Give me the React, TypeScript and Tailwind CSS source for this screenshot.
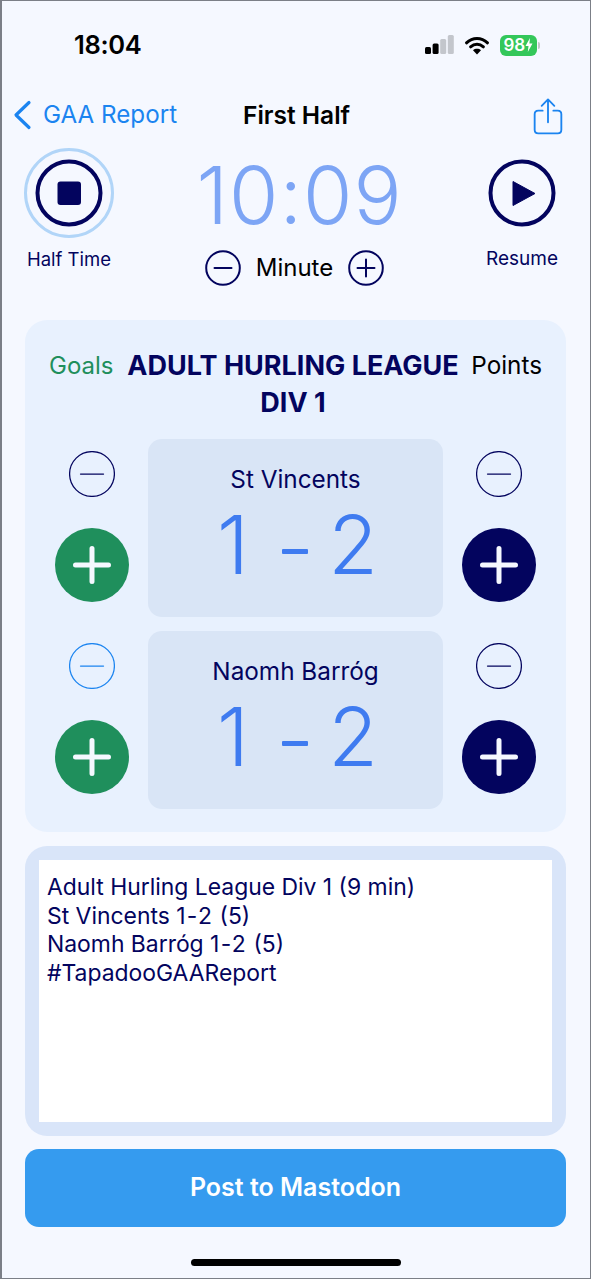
import React from "react";

const navy = "#03045e";

function MinusCircle({ size, color = navy, sw = 1.25 }: { size: number; color?: string; sw?: number }) {
  return (
    <svg width={size} height={size} viewBox="0 0 46 46" fill="none" className="shrink-0">
      <circle cx="23" cy="23" r="22.4" stroke={color} strokeWidth={sw} />
      <path d="M11.5 23H34.5" stroke={color} strokeWidth={sw} strokeLinecap="round" />
    </svg>
  );
}

function SmallCircle({ plus }: { plus?: boolean }) {
  return (
    <svg width="36" height="36" viewBox="0 0 36 36" fill="none" className="shrink-0">
      <circle cx="18" cy="18" r="16.8" stroke={navy} strokeWidth="2" />
      <path d={plus ? "M9.5 18H26.5M18 9.5V26.5" : "M9.5 18H26.5"} stroke={navy} strokeWidth="2" strokeLinecap="round" />
    </svg>
  );
}

function PlusButton({ color }: { color: string }) {
  return (
    <svg width="74" height="74" viewBox="0 0 74 74" className="shrink-0">
      <circle cx="37" cy="37" r="37" fill={color} />
      <path d="M20.5 37H53.5M37 20.5V53.5" stroke="#f5f8ff" strokeWidth="5" strokeLinecap="round" />
    </svg>
  );
}

function ScoreBox({ name }: { name: string }) {
  return (
    <div className="w-[295px] h-[178px] rounded-[14px] bg-[#d9e5f6] flex flex-col items-center">
      <div className="mt-[23px] text-[24.3px] leading-[34px] text-[#03045e]">{name}</div>
      <div className="mt-[3px] ml-[4px] w-[161px] flex items-center justify-between text-[81px] leading-[92px] font-light text-[#3f7bf0]">
        <span>1</span>
        <span className="w-[26px] h-[5px] mt-[12px] ml-[12px] bg-[#3f7bf0] rounded-[1px]" />
        <span>2</span>
      </div>
    </div>
  );
}

function Side({ green, minusColor }: { green?: boolean; minusColor?: string }) {
  return (
    <div className="w-[74px] flex flex-col items-center pt-[12px]">
      <MinusCircle size={46} color={minusColor ?? navy} />
      <div className="mt-[31px]">
        <PlusButton color={green ? "#1f8f5c" : navy} />
      </div>
    </div>
  );
}

function Row({ name, minusColor }: { name: string; minusColor?: string }) {
  return (
    <div className="flex justify-between h-[178px]">
      <Side green minusColor={minusColor} />
      <ScoreBox name={name} />
      <Side />
    </div>
  );
}

export default function App() {
  return (
    <div
      className="w-[591px] h-[1279px] overflow-hidden bg-[#f5f8ff] border border-[#7b7f87] border-l-2 text-[#03045e] flex flex-col"
      style={{ fontFamily: "Inter, 'Noto Sans', sans-serif" }}
    >
      {/* status bar */}
      <div className="h-[57px] pt-[31px] pl-[72px] pr-[50px] flex items-center justify-between shrink-0">
        <span className="text-[25.5px] leading-[32px] font-semibold text-black tracking-[-0.3px]">18:04</span>
        <div className="flex items-center gap-[10px]">
          <svg width="29" height="20" viewBox="0 0 29 20">
            <rect x="0" y="12" width="6" height="7" rx="1.5" fill="#000" />
            <rect x="7.6" y="8.5" width="6" height="10.5" rx="1.5" fill="#000" />
            <rect x="15.2" y="4" width="6" height="15" rx="1.5" fill="#c3c6cc" />
            <rect x="22.8" y="0" width="6" height="19" rx="1.5" fill="#c3c6cc" />
          </svg>
          <svg width="26" height="19" viewBox="0 0 24 19" fill="none">
            <path d="M1.5 6.8C7.6 1 16.4 1 22.5 6.8" stroke="#000" strokeWidth="3" strokeLinecap="round" />
            <path d="M5.6 10.8C9.4 7.3 14.6 7.3 18.4 10.8" stroke="#000" strokeWidth="3" strokeLinecap="round" />
            <path d="M12 18.5L8 14.2C10.3 12.4 13.7 12.4 16 14.2Z" fill="#000" />
          </svg>
          <div className="flex items-center">
            <div className="w-[37px] h-[21px] rounded-[6px] bg-[#34c75a] text-white text-[17px] leading-[21px] font-semibold flex items-center justify-center tracking-[-0.2px]">
              98
              <svg width="8" height="14" viewBox="0 0 8 14" className="ml-[0.5px]">
                <path d="M5 0L0.5 8H3.5L2.8 14L7.5 5.5H4.4Z" fill="#fff" />
              </svg>
            </div>
            <div className="w-[2px] h-[7px] ml-[1px] rounded-r-full bg-[#c3c6cc]" />
          </div>
        </div>
      </div>

      {/* nav */}
      <div className="h-[60px] mt-[27px] pl-[10px] pr-[26px] flex items-center justify-between relative shrink-0">
        <div className="flex items-center gap-[11px] text-[#1b84f0]">
          <svg width="20" height="30" viewBox="0 0 20 30" fill="none">
            <path d="M17 2.5L4 15L17 27.5" stroke="#1b84f0" strokeWidth="3.2" strokeLinecap="round" strokeLinejoin="round" />
          </svg>
          <span className="text-[24.2px] leading-[32px]">GAA Report</span>
        </div>
        <span className="absolute left-[241px] top-[14px] text-[24.5px] leading-[32px] font-semibold text-black">First Half</span>
        <svg width="30" height="37" viewBox="0 0 30 38" fill="none" className="mb-[-3px] ml-auto mr-[1px]">
          <path d="M9.5 13H5C2.8 13 1.3 14.5 1.3 16.7V32.6C1.3 34.8 2.8 36.3 5 36.3H25C27.2 36.3 28.7 34.8 28.7 32.6V16.7C28.7 14.5 27.2 13 25 13H20.5" stroke="#1b84f0" strokeWidth="1.9" strokeLinecap="round" />
          <path d="M15 25V2M8.5 8L15 1.5L21.5 8" stroke="#1b84f0" strokeWidth="1.9" strokeLinecap="round" strokeLinejoin="round" />
        </svg>
      </div>

      {/* controls */}
      <div className="pl-[22px] pr-[23px] flex justify-between items-start h-[146px] mt-[3px] shrink-0">
        <div className="w-[90px] flex flex-col items-center">
          <svg width="90" height="90" viewBox="0 0 90 90" fill="none">
            <circle cx="45" cy="45" r="43.5" stroke="#b1d5f8" strokeWidth="3" />
            <circle cx="45" cy="45" r="31.5" stroke={navy} strokeWidth="4" />
            <rect x="33.5" y="33.5" width="23.5" height="23.5" rx="3" fill={navy} />
          </svg>
          <span className="mt-[9px] text-[18.5px] leading-[24px] whitespace-nowrap">Half Time</span>
        </div>
        <div className="flex flex-col items-center ml-[8px]">
          <div className="text-[80px] leading-[88px] font-light text-[#7da5f5] mt-[3px] h-[88px] tracking-[1px]">10:09</div>
          <div className="mt-[11px] flex items-center gap-[15px] ml-[-10px]">
            <SmallCircle />
            <span className="text-[24px] leading-[32px] text-black">Minute</span>
            <SmallCircle plus />
          </div>
        </div>
        <div className="w-[90px] flex flex-col items-center">
          <svg width="90" height="90" viewBox="0 0 90 90" fill="none">
            <circle cx="45" cy="45" r="31.5" stroke={navy} strokeWidth="4" />
            <path d="M36 33.5V57.5L58 45.5Z" fill={navy} stroke={navy} strokeWidth="1" strokeLinejoin="round" />
          </svg>
          <span className="mt-[9px] text-[19px] leading-[24px]">Resume</span>
        </div>
      </div>

      {/* card */}
      <div className="ml-[23px] mr-[24px] mt-[26px] h-[512px] rounded-[22px] bg-[#e8f1fe] px-[30px] shrink-0">
        <div className="h-[119px] pt-[27px] relative">
          <span className="absolute left-[-6px] top-[27px] text-[24px] leading-[37px] text-[#1f8f5c]">Goals</span>
          <span className="absolute right-[-6px] top-[27px] text-[24.3px] leading-[37px] text-black">Points</span>
          <div className="text-center text-[27px] leading-[37px] font-bold text-[#03045e] pr-[5px]">
            ADULT HURLING LEAGUE
            <br />
            DIV 1
          </div>
        </div>
        <div className="flex flex-col gap-[14px]">
          <Row name="St Vincents" />
          <Row name="Naomh Barróg" minusColor="#1b84f0" />
        </div>
      </div>

      {/* text area */}
      <div className="ml-[23px] mr-[24px] mt-[14px] h-[290px] rounded-[22px] bg-[#d9e5f9] p-[14px] shrink-0">
        <div className="w-full h-full bg-white px-[8px] pt-[13px] text-[22.9px] leading-[28.5px] text-[#03045e] whitespace-pre">
          <div>Adult Hurling League Div 1 (9 min)</div>
          <div>St Vincents <span className="tracking-[1.3px]">1-2</span> (5)</div>
          <div>Naomh Barróg <span className="tracking-[1.3px]">1-2</span> (5)</div>
          <div>#TapadooGAAReport</div>
        </div>
      </div>

      {/* button */}
      <div className="ml-[23px] mr-[24px] mt-[13px] h-[78px] rounded-[14px] bg-[#359bef] flex items-center justify-center text-white text-[25px] font-semibold shrink-0">
        Post to Mastodon
      </div>

      {/* home indicator */}
      <div className="mt-[32px] ml-[189px] w-[210px] h-[7px] rounded-full bg-black shrink-0" />
    </div>
  );
}
